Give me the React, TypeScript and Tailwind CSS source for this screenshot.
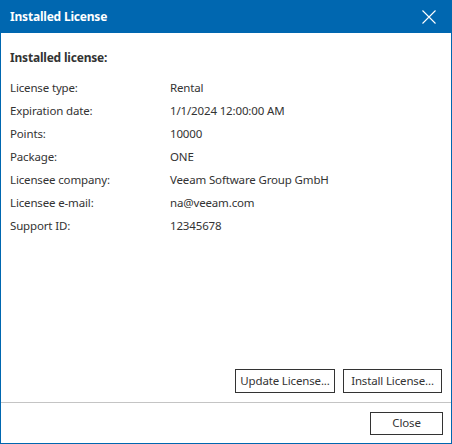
import React from "react";

const rows: [string, string][] = [
  ["License type:", "Rental"],
  ["Expiration date:", "1/1/2024 12:00:00 AM"],
  ["Points:", "10000"],
  ["Package:", "ONE"],
  ["Licensee company:", "Veeam Software Group GmbH"],
  ["Licensee e-mail:", "na@veeam.com"],
  ["Support ID:", "12345678"],
];

export default function App() {
  return (
    <div
      className="w-[452px] h-[444px] flex flex-col bg-white border-x border-b border-[#0067b0] text-[11.5px] tracking-[-0.15px] text-[#333333]"
      style={{ fontFamily: '"Noto Sans", "Open Sans", sans-serif' }}
    >
      <div className="h-[33px] shrink-0 bg-[#0067b0] flex items-center justify-between pl-[9px] pr-[15px]">
        <span className="text-white font-bold text-[12px] tracking-[-0.2px]">Installed License</span>
        <svg width="14" height="14" viewBox="0 0 14 14">
          <path d="M0.5 0.5 L13.5 13.5 M13.5 0.5 L0.5 13.5" stroke="white" strokeWidth="1.1" />
        </svg>
      </div>
      <div className="flex-1 flex flex-col px-[9px]">
        <div className="mt-[15px] h-[20px] flex items-center font-bold text-[12px] tracking-[-0.2px]">Installed license:</div>
        <div className="mt-[8px] flex flex-col">
          {rows.map(([k, v]) => (
            <div key={k} className="h-[23px] flex items-center">
              <span className="w-[160px]">{k}</span>
              <span>{v}</span>
            </div>
          ))}
        </div>
        <div className="flex-1" />
        <div className="flex justify-end gap-[8px] mb-[9px]">
          <button className="w-[100px] h-[24px] border border-[#333333] bg-white">Update License...</button>
          <button className="w-[99px] h-[24px] border border-[#333333] bg-white">Install License...</button>
        </div>
      </div>
      <div className="h-[41px] shrink-0 border-t border-[#c4c4c4] flex items-center justify-end pr-[8px]">
        <button className="w-[73px] h-[23px] border border-[#333333] bg-white">Close</button>
      </div>
    </div>
  );
}
